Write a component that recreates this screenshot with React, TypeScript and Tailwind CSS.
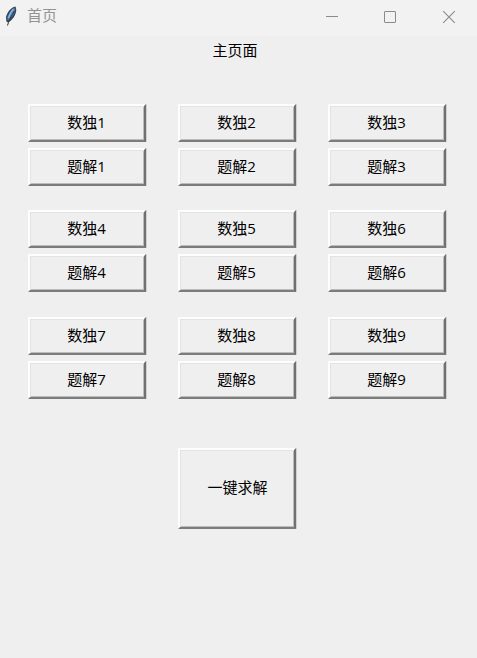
type ButtonProps = { label: string; size?: string; inset?: string };

function RaisedButton({ label, size = "h-[38px]", inset = "pr-px pb-[2px]" }: ButtonProps) {
  return (
    <button
      type="button"
      className={`${size} ${inset} flex w-[118px] items-center justify-center border-2 border-t-[#fdfdfd] border-r-[#707070] border-b-[#7c7c7c] border-l-[#fdfdfd] bg-[#efefef] text-[15px] leading-[20px] text-black shadow-[inset_1px_1px_0_#e3e3e3,inset_-1px_-1px_0_#bcbcbc,1px_0_0_#d0d0d0]`}
    >
      <span>{label}</span>
    </button>
  );
}

function Feather() {
  return (
    <svg width="14" height="20" viewBox="0 0 14 20" className="ml-[4px] shrink-0">
      <path d="M11.5 .5 C7 1.5 3.2 6 2 11 L2.4 15.5 L4 16.5 C8.5 14 12 9 12.3 4 Z" fill="#3c4147" />
      <path d="M10.6 2 C7.5 3 4.3 7.5 3.2 12 L3.8 14.4 C7.8 12 10.7 7.5 11.2 4 Z" fill="#4380c4" />
      <path d="M9.5 3 C8 4.5 5.8 8 4.4 12" stroke="#90b9e4" strokeWidth="1.3" fill="none" />
      <path d="M10.5 4.8 C9 8 6 11 3.5 19.5" stroke="#343434" strokeWidth="1" fill="none" />
    </svg>
  );
}

const groups = [
  [1, 2, 3],
  [4, 5, 6],
  [7, 8, 9],
];

export default function App() {
  return (
    <div className="flex h-[658px] w-[477px] flex-col overflow-hidden bg-[#efefef] font-['Open_Sans','Noto_Sans_CJK_SC',sans-serif]">
      <header className="flex h-[36px] shrink-0 items-start bg-[#f2f2f2]">
        <div className="flex h-[32px] items-center">
          <Feather />
          <span className="ml-[9px] pb-[2px] text-[15px] leading-[20px] text-[#929292]">首页</span>
        </div>
        <div className="mr-[21px] ml-auto flex h-[34px] items-center gap-[45px]">
          <svg width="14" height="14" viewBox="0 0 14 14" fill="none" stroke="#8b8b8b">
            <path d="M2 6.5H14" />
          </svg>
          <svg width="14" height="14" viewBox="0 0 14 14" fill="none" stroke="#8b8b8b">
            <rect x="1.5" y="1.5" width="11" height="11" rx="0.5" />
          </svg>
          <svg width="14" height="14" viewBox="0 0 14 14" fill="none" stroke="#8b8b8b" strokeWidth="1.1">
            <path d="M1.2 1.2L12.8 12.8M12.8 1.2L1.2 12.8" />
          </svg>
        </div>
      </header>
      <h1 className="mt-[4px] pr-[7px] text-center text-[15px] leading-[20px] text-black">主页面</h1>
      <main className="mt-[44px] flex flex-col gap-[24.4px] pl-[28px]">
        {groups.map((row) => (
          <section key={row[0]} className="flex gap-[32px]">
            {row.map((n) => (
              <div key={n} className="flex flex-col gap-[6px]">
                <RaisedButton label={`数独${n}`} />
                <RaisedButton label={`题解${n}`} />
              </div>
            ))}
          </section>
        ))}
      </main>
      <footer className="mt-[49px] pl-[178px]">
        <RaisedButton label="一键求解" size="h-[81px]" inset="pl-px pb-[2px]" />
      </footer>
    </div>
  );
}
